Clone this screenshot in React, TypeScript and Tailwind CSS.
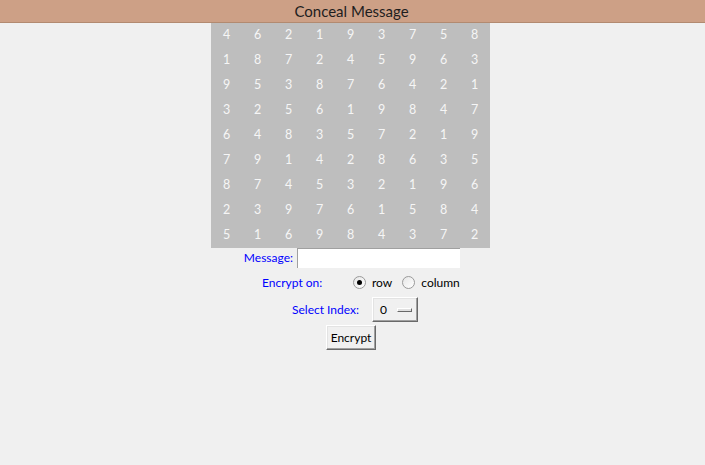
import React, { useState } from 'react';

const GRID: number[][] = [
  [4, 6, 2, 1, 9, 3, 7, 5, 8],
  [1, 8, 7, 2, 4, 5, 9, 6, 3],
  [9, 5, 3, 8, 7, 6, 4, 2, 1],
  [3, 2, 5, 6, 1, 9, 8, 4, 7],
  [6, 4, 8, 3, 5, 7, 2, 1, 9],
  [7, 9, 1, 4, 2, 8, 6, 3, 5],
  [8, 7, 4, 5, 3, 2, 1, 9, 6],
  [2, 3, 9, 7, 6, 1, 5, 8, 4],
  [5, 1, 6, 9, 8, 4, 3, 7, 2],
];

const Radio: React.FC<{ checked: boolean; onClick: () => void }> = ({ checked, onClick }) => (
  <button
    onClick={onClick}
    className="w-[13px] h-[13px] rounded-full border border-[#9a9a9a] bg-gradient-to-br from-[#e6e6e6] to-white flex items-center justify-center"
  >
    {checked && <span className="w-[5px] h-[5px] rounded-full bg-black"></span>}
  </button>
);

const App: React.FC = () => {
  const [message, setMessage] = useState('');
  const [mode, setMode] = useState<'row' | 'column'>('row');

  return (
    <div className="w-[705px] h-[465px] bg-[#f0f0f0] overflow-hidden font-['Lato',sans-serif]">
      <div className="h-[23px] bg-[#cda086] border-b border-[#b28a70] flex items-center justify-center">
        <span className="text-[15px] text-[#1e1e1e] leading-none mr-[2px]">Conceal Message</span>
      </div>

      <div className="pl-[211px] w-[490px]">
        <div className="w-[279px] bg-[#bebebe] grid grid-cols-9">
          {GRID.flat().map((n, i) => (
            <div key={i} className="h-[25px] flex items-center justify-center text-[12.5px] text-[#f6f6f6] leading-none">
              {n}
            </div>
          ))}
        </div>

        <div className="h-[20px] flex items-center text-[12px]">
          <span className="w-[82px] text-right text-[#0000ff]">Message:</span>
          <input
            value={message}
            onChange={(e) => setMessage(e.target.value)}
            className="ml-[4px] w-[163px] h-[20px] bg-white border-t border-l border-[#a0a0a0] border-r-white border-b-white outline-none px-1 text-[12px]"
          />
        </div>

        <div className="h-[29px] flex items-center text-[12px] pl-[51px]">
          <span className="text-[#0000ff] w-[91px]">Encrypt on:</span>
          <Radio checked={mode === 'row'} onClick={() => setMode('row')} />
          <span className="ml-[6px] text-black">row</span>
          <span className="ml-[10px] flex"><Radio checked={mode === 'column'} onClick={() => setMode('column')} /></span>
          <span className="ml-[6px] text-black">column</span>
        </div>

        <div className="h-[25px] flex items-center text-[12px] pl-[81px]">
          <span className="text-[#0000ff] w-[80px]">Select Index:</span>
          <div className="w-[46px] h-[25px] flex items-center pl-[7px] border border-t-white border-l-white border-r-[#696969] border-b-[#696969] shadow-[inset_-1px_-1px_0_#a0a0a0,inset_1px_1px_0_#e3e3e3]">
            <span className="text-black">0</span>
            <span className="ml-[10px] w-[15px] h-[4px] border border-t-white border-l-white border-r-[#696969] border-b-[#696969] bg-[#e0e0e0]"></span>
          </div>
        </div>

        <div className="mt-[3px] pl-[115px]">
          <button className="w-[50px] h-[25px] text-[12px] text-black flex items-center justify-center border border-t-white border-l-white border-r-[#696969] border-b-[#696969] shadow-[inset_-1px_-1px_0_#a0a0a0,inset_1px_1px_0_#e3e3e3]">
            Encrypt
          </button>
        </div>
      </div>
    </div>
  );
};

export default App;
